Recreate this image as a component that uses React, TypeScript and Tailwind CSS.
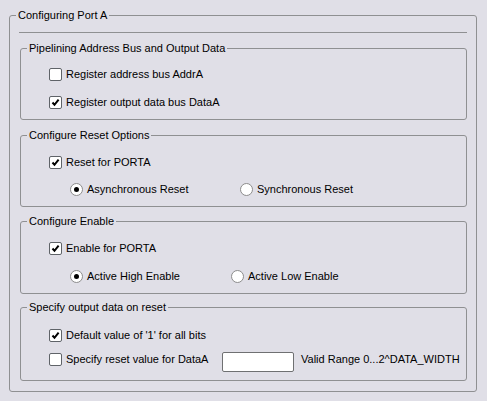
const Check = ({ checked }: { checked?: boolean }) => (
	<span className="flex h-[13px] w-[13px] shrink-0 items-center justify-center rounded-[2px] border border-[#5f6368] bg-white">
		{checked && (
			<svg width="9" height="9" viewBox="0 0 9 9">
				<path d="M1.5 4.5 L3.5 6.8 L7.6 1.6" fill="none" stroke="#000" strokeWidth="2" />
			</svg>
		)}
	</span>
);

const Radio = ({ checked }: { checked?: boolean }) => (
	<span className="flex h-[13px] w-[13px] shrink-0 items-center justify-center rounded-full border border-[#8c8c8c] bg-white">
		{checked && <span className="h-[5px] w-[5px] rounded-full bg-black" />}
	</span>
);

const CheckRow = ({ label, checked }: { label: string; checked?: boolean }) => (
	<div className="flex h-[13px] items-center gap-[4px]">
		<Check checked={checked} />
		<span>{label}</span>
	</div>
);

const RadioItem = ({ label, checked, w }: { label: string; checked?: boolean; w: string }) => (
	<div className={`flex items-center gap-[4px] ${w}`}>
		<Radio checked={checked} />
		<span>{label}</span>
	</div>
);

const Group = ({ title, className, children }: { title: string; className: string; children: React.ReactNode }) => (
	<fieldset className={`w-[447px] rounded-[3px] border border-[#8f9092] ${className}`}>
		<legend className="ml-[6px] px-[2px] leading-[13px]">{title}</legend>
		{children}
	</fieldset>
);

export default function App() {
	return (
		<div
			className="h-[401px] w-[487px] bg-[#e0dfe7] pl-[9px] pt-[9px] text-[11px] leading-[13px] text-black"
			style={{ fontFamily: '"Liberation Sans", Arial, sans-serif' }}
		>
			<fieldset className="h-[383px] w-[468px] rounded-[3px] border border-[#8f9092]">
				<legend className="ml-[6px] px-[2px] leading-[13px]">Configuring Port A</legend>
				<div className="pl-[10px]">
					<div className="ml-[-1px] mt-[10px] w-[448px] border-t border-[#8f9092]" />

					{/* pipelining */}
					<Group title="Pipelining Address Bus and Output Data" className="mt-[9px] h-[78px]">
						<div className="flex flex-col gap-[15px] pl-[28px] pt-[13px]">
							<CheckRow label="Register address bus AddrA" />
							<CheckRow label="Register output data bus DataA" checked />
						</div>
					</Group>

					{/* reset */}
					<Group title="Configure Reset Options" className="mt-[9px] h-[78px]">
						<div className="flex flex-col gap-[14px] pl-[28px] pt-[14px]">
							<CheckRow label="Reset for PORTA" checked />
							<div className="flex h-[13px] items-center pl-[21px]">
								<RadioItem label="Asynchronous Reset" checked w="w-[170px]" />
								<RadioItem label="Synchronous Reset" w="" />
							</div>
						</div>
					</Group>

					{/* enable */}
					<Group title="Configure Enable" className="mt-[8px] h-[79px]">
						<div className="flex flex-col gap-[15px] pl-[28px] pt-[14px]">
							<CheckRow label="Enable for PORTA" checked />
							<div className="flex h-[13px] items-center pl-[21px]">
								<RadioItem label="Active High Enable" checked w="w-[161px]" />
								<RadioItem label="Active Low Enable" w="" />
							</div>
						</div>
					</Group>

					{/* output on reset */}
					<Group title="Specify output data on reset" className="mt-[7px] h-[80px]">
						<div className="flex flex-col gap-[11px] pl-[28px] pt-[15px]">
							<CheckRow label="Default value of '1' for all bits" checked />
							<div className="flex h-[13px] items-start">
								<Check />
								<span className="ml-[4px] w-[156px]">Specify reset value for DataA</span>
								<input
									type="text"
									className="mt-[-1px] h-[20px] w-[72px] shrink-0 rounded-[2px] border border-[#6f7072] bg-white outline-none"
								/>
								<span className="ml-[7px]">Valid Range 0...2^DATA_WIDTH</span>
							</div>
						</div>
					</Group>
				</div>
			</fieldset>
		</div>
	);
}
